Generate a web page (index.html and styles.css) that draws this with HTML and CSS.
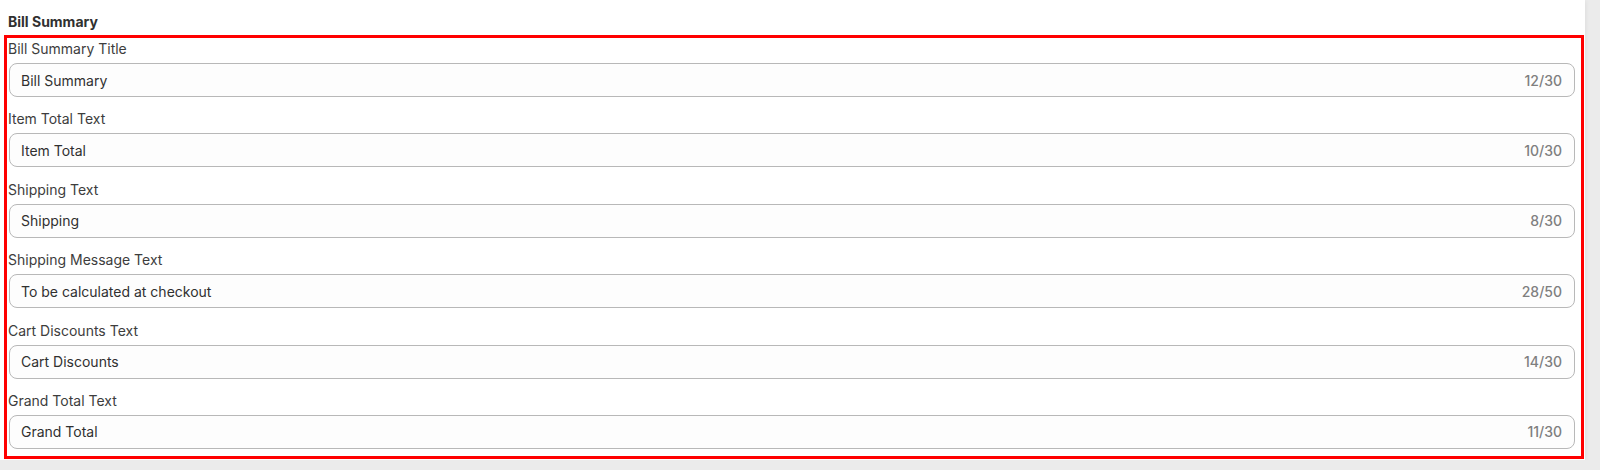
FILE: index.html
```html
<!DOCTYPE html>
<html lang="en">
<head>
    <meta charset="UTF-8">
    <meta name="viewport" content="width=device-width, initial-scale=1.0">
    <title>Bill Summary</title>
    <link rel="stylesheet" href="styles.css">
</head>
<body>
    <div class="panel">
        <h2 class="panel-title">Bill Summary</h2>

        <div class="fields">
            <div class="field">
                <label class="field-label">Bill Summary Title</label>
                <div class="text-input">
                    <span class="input-value">Bill Summary</span>
                    <span class="char-count">12/30</span>
                </div>
            </div>
            <div class="field">
                <label class="field-label">Item Total Text</label>
                <div class="text-input">
                    <span class="input-value">Item Total</span>
                    <span class="char-count">10/30</span>
                </div>
            </div>
            <div class="field">
                <label class="field-label">Shipping Text</label>
                <div class="text-input">
                    <span class="input-value">Shipping</span>
                    <span class="char-count">8/30</span>
                </div>
            </div>
            <div class="field">
                <label class="field-label">Shipping Message Text</label>
                <div class="text-input">
                    <span class="input-value">To be calculated at checkout</span>
                    <span class="char-count">28/50</span>
                </div>
            </div>
            <div class="field">
                <label class="field-label">Cart Discounts Text</label>
                <div class="text-input">
                    <span class="input-value">Cart Discounts</span>
                    <span class="char-count">14/30</span>
                </div>
            </div>
            <div class="field">
                <label class="field-label">Grand Total Text</label>
                <div class="text-input">
                    <span class="input-value">Grand Total</span>
                    <span class="char-count">11/30</span>
                </div>
            </div>
        </div>
    </div>
</body>
</html>
```

FILE: styles.css
```css
body {
    margin: 0;
    background: #ebebeb;
    font-family: Inter, "Noto Sans", sans-serif;
    color: #303030;
}
.panel {
    width: 1585px;
    background: #fff;
    padding: 12px 0 1px 0;
    box-shadow: 1px 1px 4px rgba(0,0,0,0.06);
}
.panel-title {
    margin: 0 0 3px 8px;
    font-size: 14px;
    font-weight: 700;
    line-height: 20px;
}
.fields {
    margin: 0 1px 0 4px;
    border: 3px solid #ff0000;
    padding: 1px 6px 7px 2px;
    display: flex;
    flex-direction: column;
    gap: 12.4px;
}
.field {
    display: flex;
    flex-direction: column;
    gap: 4px;
}
.field-label {
    font-size: 14px;
    line-height: 20px;
    color: #3d3d3d;
    margin-left: -1px;
}
.text-input {
    height: 34px;
    box-sizing: border-box;
    border: 1px solid #b8b8b8;
    border-radius: 8px;
    background: #fdfdfd;
    display: flex;
    align-items: center;
    justify-content: space-between;
    padding: 0 12px 0 11px;
    font-size: 14px;
}
.input-value {
    color: #303030;
}
.char-count {
    color: #7f7f7f;
    font-weight: 500;
}
```
